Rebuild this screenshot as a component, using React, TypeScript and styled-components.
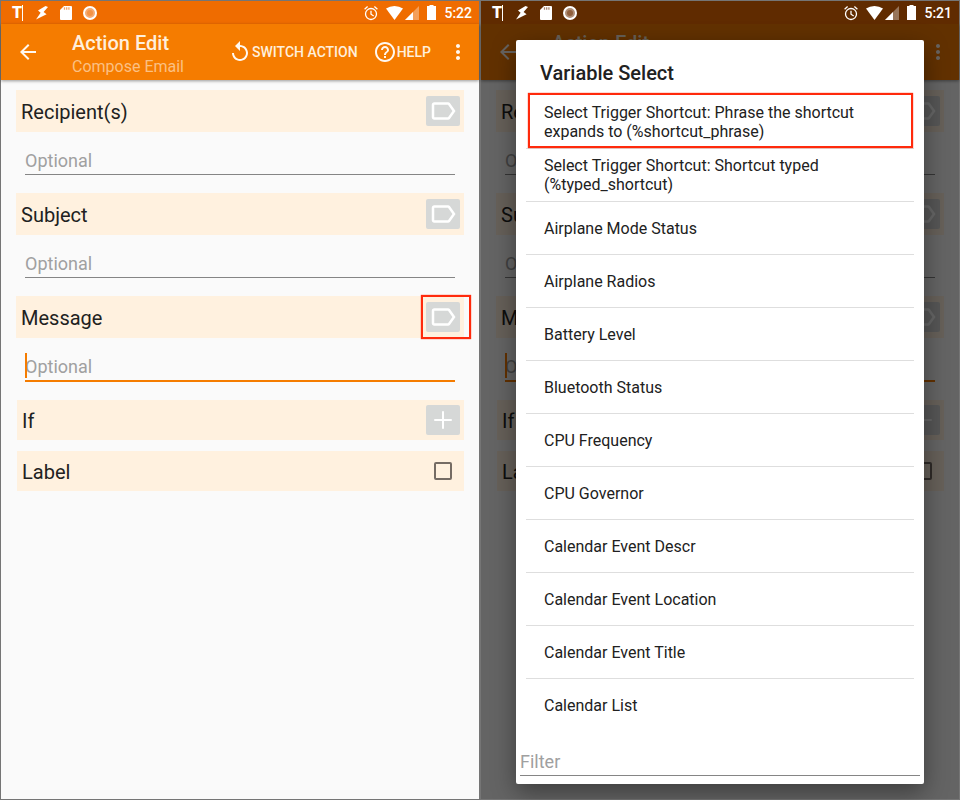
import React, { useId } from "react";
import styled, { createGlobalStyle, css } from "styled-components";

const GlobalStyle = createGlobalStyle`
  *, *::before, *::after { box-sizing: border-box; }
  body { margin: 0; font-family: Roboto, "Liberation Sans", sans-serif; color: #212121; }
  button, input { font-family: inherit; margin: 0; }
`;

const ACCENT = "#f57c00";
const MARK = "#ff2a0c";

const Page = styled.main`
  display: grid;
  grid-template-columns: 1fr 1fr;
  min-height: 100vh;
`;

const Phone = styled.section`
  position: relative;
  display: flex;
  flex-direction: column;
  border: 1px solid #757575;
  background: #fafafa;
  min-width: 0;
`;

const Screen = styled.div`
  flex: 1;
`;

const StatusBar = styled.div<{ $dim?: boolean }>`
  position: relative;
  z-index: ${(p) => (p.$dim ? 1 : 0)};
  display: flex;
  justify-content: space-between;
  align-items: center;
  height: 23px;
  padding: 0 7px 0 10px;
  background: ${(p) => (p.$dim ? "#602b00" : "#ef6c00")};
  color: #fff;
`;

const IconGroup = styled.div<{ $gap: number }>`
  display: flex;
  align-items: center;
  gap: ${(p) => p.$gap}px;
  svg { display: block; }
`;

const TypingMark = styled.span`
  width: 14px;
  padding-left: 1px;
  font-size: 16px;
  line-height: 16px;
  font-weight: 900;
  display: flex;
  &::after {
    content: "";
    width: 1px;
    height: 16px;
    background: #fff;
  }
`;

const Clock = styled.time`
  font-size: 14px;
  line-height: 16px;
  font-weight: 500;
`;

const AppBar = styled.header`
  position: relative;
  display: flex;
  align-items: center;
  height: 56px;
  padding: 0 9px 0 15px;
  background: ${ACCENT};
  color: #ffefdc;
  box-shadow: 0 1px 3px rgba(0, 0, 0, 0.4);
`;

const BarButton = styled.button`
  display: flex;
  align-items: center;
  padding: 0;
  border: 0;
  background: none;
  color: inherit;
  font-size: 14px;
  line-height: 24px;
  font-weight: 500;
  white-space: nowrap;
  svg { display: block; color: #fff8f0; }
`;

const Titles = styled.div`
  flex: 1;
  margin-left: 32px;
  padding-top: 6px;
`;

const Title = styled.h1`
  margin: 0;
  font-size: 20px;
  line-height: 24px;
  font-weight: 500;
`;

const Subtitle = styled.p`
  margin: 0;
  font-size: 16px;
  line-height: 24px;
  color: #fbc083;
`;

const Actions = styled.div`
  display: flex;
  gap: 15px;
`;

const Form = styled.form`
  padding: 10px 15px 0;
`;

const FieldHead = styled.div<{ $compact?: boolean }>`
  display: flex;
  align-items: center;
  justify-content: space-between;
  height: ${(p) => (p.$compact ? 40 : 42)}px;
  margin: ${(p) => (p.$compact ? "0 0 11px 1px" : "0")};
  padding: 0 4px 0 5px;
  background: #fff1df;
`;

const FieldName = styled.label`
  padding-top: 2px;
  font-size: 20px;
  line-height: 24px;
`;

const IconButton = styled.button`
  display: flex;
  align-items: center;
  justify-content: center;
  width: 34px;
  height: 30px;
  padding: 0;
  border: 0;
  border-radius: 2px;
  background: #d6d8d7;
  color: #fff;
`;

const Marked = styled.div<{ $on?: boolean }>`
  position: relative;
  ${(p) =>
    p.$on &&
    css`
      &::after {
        content: "";
        position: absolute;
        inset: -7px -11px -7px -5px;
        border: 2px solid ${MARK};
        box-shadow: 0 0 1px ${MARK};
        pointer-events: none;
      }
    `}
`;

const InputWrap = styled.div`
  position: relative;
  margin: 0 9px 18px;
`;

const TextInput = styled.input<{ $active?: boolean }>`
  display: block;
  width: 100%;
  padding: 14px 0 0;
  border: 0;
  border-bottom: ${(p) => (p.$active ? `2px solid ${ACCENT}` : "1px solid #858585")};
  border-radius: 0;
  outline: 0;
  background: none;
  font-size: 18px;
  height: ${(p) => (p.$active ? 44 : 43)}px;
  color: #212121;
  &::placeholder { color: #a0a0a0; opacity: 1; }
`;

const Caret = styled.span`
  position: absolute;
  left: 0;
  top: 15px;
  width: 2px;
  height: 25px;
  background: ${ACCENT};
`;

const CheckBox = styled.input`
  appearance: none;
  width: 18px;
  height: 18px;
  margin-right: 8px;
  border: 2px solid #756c64;
  border-radius: 2px;
`;

const Overlay = styled.div`
  position: absolute;
  inset: 0;
  display: flex;
  padding: 39px 35px 15px;
  background: rgba(0, 0, 0, 0.6);
`;

const Dialog = styled.div`
  position: relative;
  z-index: 2;
  flex: 1;
  display: flex;
  flex-direction: column;
  min-width: 0;
  border-radius: 2px;
  background: #fff;
  box-shadow: 0 8px 24px rgba(0, 0, 0, 0.4);
`;

const DialogTitle = styled.h2`
  margin: 0;
  padding: 21px 24px 11px;
  font-size: 20px;
  line-height: 24px;
  font-weight: 500;
`;

const List = styled.ul`
  flex: 1;
  margin: 0;
  padding: 0 10px;
  list-style: none;
`;

const Item = styled.li<{ $marked?: boolean }>`
  position: relative;
  & + & { border-top: 1px solid #dedede; }
  ${(p) =>
    p.$marked &&
    css`
      &::after {
        content: "";
        position: absolute;
        z-index: 1;
        inset: -3px 1px 0 2px;
        border: 2px solid ${MARK};
        box-shadow: 0 0 1px ${MARK};
        pointer-events: none;
      }
    `}
`;

const Option = styled.button`
  display: flex;
  align-items: center;
  width: 100%;
  min-height: 52px;
  padding: 0 18px;
  border: 0;
  background: none;
  color: inherit;
  font-size: 16px;
  line-height: 19px;
  text-align: left;
`;

const Filter = styled.div`
  padding: 0 4px 8px;
`;

const Glyph = ({ d, size = 24 }: { d: string; size?: number }) => (
  <svg width={size} height={size} viewBox="0 0 24 24" fill="currentColor" aria-hidden="true">
    <path d={d} />
  </svg>
);

const BACK = "M20 11H7.83l5.59-5.59L12 4l-8 8 8 8 1.41-1.41L7.83 13H20z";
const REPLAY =
  "M12 5V1L7 6l5 5V7c3.31 0 6 2.69 6 6s-2.69 6-6 6-6-2.69-6-6H4c0 4.42 3.58 8 8 8s8-3.58 8-8-3.58-8-8-8z";
const HELP =
  "M11 18h2v-2h-2v2zm1-16C6.48 2 2 6.48 2 12s4.48 10 10 10 10-4.48 10-10S17.52 2 12 2zm0 18c-4.41 0-8-3.59-8-8s3.59-8 8-8 8 3.59 8 8-3.59 8-8 8zm0-14c-2.21 0-4 1.79-4 4h2c0-1.1.9-2 2-2s2 .9 2 2c0 2-3 1.75-3 5h2c0-2.25 3-2.5 3-5 0-2.21-1.79-4-4-4z";
const MORE =
  "M12 8c1.1 0 2-.9 2-2s-.9-2-2-2-2 .9-2 2 .9 2 2 2zm0 2c-1.1 0-2 .9-2 2s.9 2 2 2 2-.9 2-2-.9-2-2-2zm0 6c-1.1 0-2 .9-2 2s.9 2 2 2 2-.9 2-2-.9-2-2-2z";
const TAG =
  "M17.63 5.84C17.27 5.33 16.67 5 16 5L5 5.01C3.9 5.01 3 5.9 3 7v10c0 1.1.9 1.99 2 1.99L16 19c.67 0 1.27-.33 1.63-.84L22 12l-4.37-6.16zM16 17H5V7h11l3.55 5L16 17z";
const ADD = "M19 12.8h-6.2V19h-1.6v-6.2H5v-1.6h6.2V5h1.6v6.2H19z";

function Status({ time, dim }: { time: string; dim?: boolean }) {
  return (
    <StatusBar $dim={dim}>
      <IconGroup $gap={10}>
        <TypingMark>T</TypingMark>
        <svg width="14" height="16" viewBox="0 0 14 16" fill="#fff" aria-hidden="true">
          <path d="M10.5 1 3 5.5l2.6 2.3L1 14.6l10.6-5.4-3-2.3L13 2z" />
        </svg>
        <svg width="14" height="16" viewBox="0 0 14 16" aria-hidden="true">
          <path fill="#fff" d="M5 1h7q1 0 1 1v12q0 1-1 1H2q-1 0-1-1V5z" />
          <path stroke={dim ? "#a98870" : "#f6a66a"} strokeWidth="1.3" d="M5.5 2.2v2.6M7.7 2.2v2.6M9.9 2.2v2.6" />
        </svg>
        <svg width="14" height="16" viewBox="0 0 14 16" aria-hidden="true">
          <circle cx="7" cy="8" r="6" fill={dim ? "#af8f78" : "#f6ab72"} stroke="#fff" strokeWidth="2" />
          <circle cx="7" cy="8" r="3" fill={dim ? "#905f3c" : "#f39346"} />
        </svg>
      </IconGroup>
      <IconGroup $gap={8}>
        <svg width="14" height="16" viewBox="0 0 14 16" fill="none" stroke="#fff" strokeWidth="1.3" aria-hidden="true">
          <circle cx="7" cy="9" r="5.5" />
          <path d="M7 5.7V9.2l2.7 1.8M.6 4.2 3.6 1.6M13.4 4.2l-3-2.6" />
        </svg>
        <IconGroup $gap={2}>
          <svg width="17" height="16" viewBox="0 0 17 16" aria-hidden="true">
            <path fill="#fff" d="M8.5 15 0 3.6Q3.8 1 8.5 1T17 3.6z" />
          </svg>
          <svg width="14" height="16" viewBox="0 0 14 16" fill="#fff" aria-hidden="true">
            <path fillOpacity=".35" d="M14 1v14H0z" />
            <path d="M8 7v8H0z" />
          </svg>
        </IconGroup>
        <svg width="9" height="16" viewBox="0 0 9 16" aria-hidden="true">
          <path fill="#fff" d="M2.5 0h4v1H9v14H0V1h2.5z" />
        </svg>
        <Clock>{time}</Clock>
      </IconGroup>
    </StatusBar>
  );
}

function TextField({ name, active, marked }: { name: string; active?: boolean; marked?: boolean }) {
  const id = useId();
  return (
    <>
      <FieldHead>
        <FieldName htmlFor={id}>{name}</FieldName>
        <Marked $on={marked}>
          <IconButton type="button" aria-label={`Insert variable in ${name}`}>
            <Glyph d={TAG} size={30} />
          </IconButton>
        </Marked>
      </FieldHead>
      <InputWrap>
        <TextInput id={id} type="text" placeholder="Optional" $active={active} />
        {active && <Caret />}
      </InputWrap>
    </>
  );
}

function ActionEdit({ marked, covered }: { marked?: boolean; covered?: boolean }) {
  const id = useId();
  return (
    <Screen inert={covered}>
      <AppBar>
        <BarButton type="button" aria-label="Back">
          <Glyph d={BACK} />
        </BarButton>
        <Titles>
          <Title>Action Edit</Title>
          <Subtitle>Compose Email</Subtitle>
        </Titles>
        <Actions>
          <BarButton type="button">
            <Glyph d={REPLAY} />
            SWITCH ACTION
          </BarButton>
          <BarButton type="button">
            <Glyph d={HELP} />
            HELP
          </BarButton>
          <BarButton type="button" aria-label="More options">
            <Glyph d={MORE} />
          </BarButton>
        </Actions>
      </AppBar>
      <Form>
        <TextField name="Recipient(s)" />
        <TextField name="Subject" />
        <TextField name="Message" active marked={marked} />
        <FieldHead $compact>
          <FieldName as="span">If</FieldName>
          <IconButton type="button" aria-label="Add condition">
            <Glyph d={ADD} size={30} />
          </IconButton>
        </FieldHead>
        <FieldHead $compact>
          <FieldName htmlFor={id}>Label</FieldName>
          <CheckBox id={id} type="checkbox" />
        </FieldHead>
      </Form>
    </Screen>
  );
}

const VARIABLES = [
  "Select Trigger Shortcut: Phrase the shortcut expands to (%shortcut_phrase)",
  "Select Trigger Shortcut: Shortcut typed (%typed_shortcut)",
  "Airplane Mode Status",
  "Airplane Radios",
  "Battery Level",
  "Bluetooth Status",
  "CPU Frequency",
  "CPU Governor",
  "Calendar Event Descr",
  "Calendar Event Location",
  "Calendar Event Title",
  "Calendar List",
];

function VariableSelect() {
  return (
    <Overlay>
      <Dialog role="dialog" aria-labelledby="variable-title">
        <DialogTitle id="variable-title">Variable Select</DialogTitle>
        <List>
          {VARIABLES.map((name, i) => (
            <Item key={name} $marked={i === 0}>
              <Option type="button">{name}</Option>
            </Item>
          ))}
        </List>
        <Filter>
          <TextInput type="text" placeholder="Filter" aria-label="Filter" />
        </Filter>
      </Dialog>
    </Overlay>
  );
}

export default function App() {
  return (
    <>
      <GlobalStyle />
      <Page>
        <Phone>
          <Status time="5:22" />
          <ActionEdit marked />
        </Phone>
        <Phone>
          <Status time="5:21" dim />
          <ActionEdit covered />
          <VariableSelect />
        </Phone>
      </Page>
    </>
  );
}
